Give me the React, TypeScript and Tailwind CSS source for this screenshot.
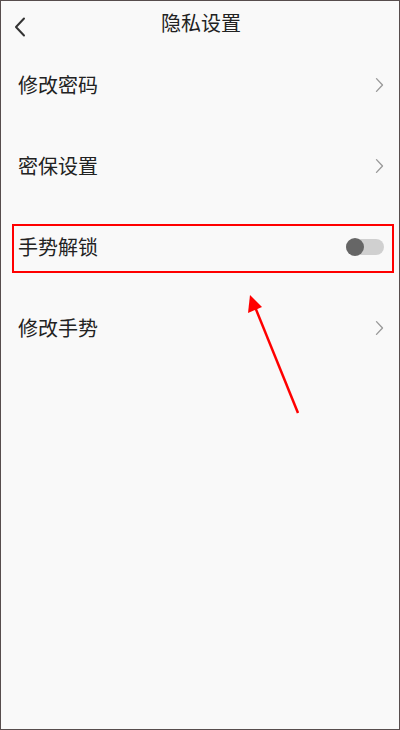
import React from 'react';

const rows = [
  { label: '修改密码', kind: 'link' },
  { label: '密保设置', kind: 'link' },
  { label: '手势解锁', kind: 'toggle' },
  { label: '修改手势', kind: 'link' },
];

function Chevron({ dir, className }: { dir: 'left' | 'right'; className?: string }) {
  return (
    <svg className={className} viewBox="0 0 12 20" fill="none" stroke="currentColor" strokeLinecap="round" strokeLinejoin="round">
      {dir === 'left' ? <polyline points="10,1.5 2,10 10,18.5" /> : <polyline points="2,1.5 10,10 2,18.5" />}
    </svg>
  );
}

export default function App() {
  return (
    <div
      className="relative w-[400px] h-[730px] bg-[#f9f9f9] border border-[#574d4d] text-[#222] overflow-hidden"
      style={{ fontFamily: '"Noto Sans CJK SC", "Noto Sans", sans-serif' }}
    >
      {/* Header */}
      <div className="relative h-[43px] flex items-center justify-center">
        <Chevron dir="left" className="absolute left-[13px] top-[16px] w-[12px] h-[20px] text-[#333] [stroke-width:2]" />
        <h1 className="text-[20px] leading-none pl-[2px] pt-[1px]">隐私设置</h1>
      </div>

      {/* Rows */}
      <div className="flex flex-col">
        {rows.map((r) => (
          <div key={r.label} className="h-[81px] flex items-center justify-between pl-[17px] pr-[15px]">
            <span className="text-[20px] leading-none">{r.label}</span>
            {r.kind === 'link' ? (
              <Chevron dir="right" className="w-[9px] h-[16px] text-[#999] [stroke-width:1.8]" />
            ) : (
              <div className="relative w-[38px] h-[16px] rounded-full bg-[#d0d0d0]">
                <div className="absolute left-0 top-[-1px] w-[18px] h-[18px] rounded-full bg-[#666]" />
              </div>
            )}
          </div>
        ))}
      </div>

      {/* Annotation: red box */}
      <div className="absolute left-[11px] top-[223px] w-[382px] h-[49px] border-2 border-[#f00]" />

      {/* Annotation: arrow */}
      <svg className="absolute left-0 top-0" width="400" height="730" viewBox="0 0 400 730">
        <line x1="297" y1="412" x2="254" y2="306" stroke="#f00" strokeWidth="2.5" />
        <polygon points="249,294 247,312 261,306" fill="#f00" />
      </svg>
    </div>
  );
}
